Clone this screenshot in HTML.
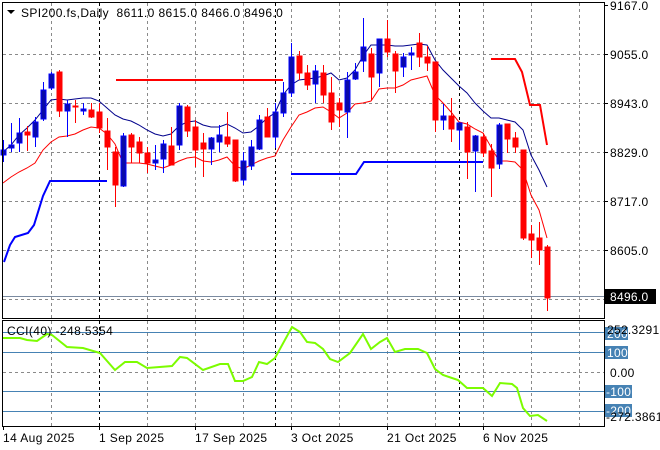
<!DOCTYPE html>
<html><head><meta charset="utf-8"><style>
html,body{margin:0;padding:0;background:#fff}
svg{display:block;font-family:"Liberation Sans",Tahoma,sans-serif}
.w{letter-spacing:0.4px;font-size:12px}
</style></head><body>
<svg width="660" height="450" viewBox="0 0 660 450" xmlns="http://www.w3.org/2000/svg">
<rect width="660" height="450" fill="#fff"/>
<g stroke="#8a8a8a" stroke-dasharray="3,3" stroke-width="1">
<line x1="51.5" y1="3" x2="51.5" y2="318"/><line x1="147.5" y1="3" x2="147.5" y2="318"/><line x1="195.5" y1="3" x2="195.5" y2="318"/><line x1="243.5" y1="3" x2="243.5" y2="318"/><line x1="291.5" y1="3" x2="291.5" y2="318"/><line x1="339.5" y1="3" x2="339.5" y2="318"/><line x1="387.5" y1="3" x2="387.5" y2="318"/><line x1="435.5" y1="3" x2="435.5" y2="318"/><line x1="483.5" y1="3" x2="483.5" y2="318"/><line x1="531.5" y1="3" x2="531.5" y2="318"/><line x1="579.5" y1="3" x2="579.5" y2="318"/>
<line x1="51.5" y1="321" x2="51.5" y2="426"/><line x1="147.5" y1="321" x2="147.5" y2="426"/><line x1="195.5" y1="321" x2="195.5" y2="426"/><line x1="243.5" y1="321" x2="243.5" y2="426"/><line x1="291.5" y1="321" x2="291.5" y2="426"/><line x1="339.5" y1="321" x2="339.5" y2="426"/><line x1="387.5" y1="321" x2="387.5" y2="426"/><line x1="435.5" y1="321" x2="435.5" y2="426"/><line x1="483.5" y1="321" x2="483.5" y2="426"/><line x1="531.5" y1="321" x2="531.5" y2="426"/><line x1="579.5" y1="321" x2="579.5" y2="426"/>
<line x1="3" y1="54.5" x2="604" y2="54.5"/><line x1="3" y1="103.5" x2="604" y2="103.5"/><line x1="3" y1="152.5" x2="604" y2="152.5"/><line x1="3" y1="201.5" x2="604" y2="201.5"/><line x1="3" y1="250.5" x2="604" y2="250.5"/><line x1="3" y1="299.5" x2="604" y2="299.5"/>
<line x1="3" y1="372.5" x2="604" y2="372.5"/>
</g>
<g stroke="#000" stroke-dasharray="3,3" stroke-width="1">
<line x1="99.5" y1="3" x2="99.5" y2="426"/><line x1="275.5" y1="3" x2="275.5" y2="426"/><line x1="459.5" y1="3" x2="459.5" y2="426"/>
</g>
<line x1="3" y1="296.5" x2="604" y2="296.5" stroke="#7a8aa0" stroke-width="1"/>
<g stroke="#4682b4" stroke-width="1">
<line x1="3" y1="332.5" x2="604" y2="332.5"/><line x1="3" y1="352.5" x2="604" y2="352.5"/><line x1="3" y1="391.5" x2="604" y2="391.5"/><line x1="3" y1="411.5" x2="604" y2="411.5"/>
</g>
<polyline fill="none" stroke="#ff0000" stroke-width="2" points="116,80 283,80"/>
<polyline fill="none" stroke="#ff0000" stroke-width="2" points="491,59 515,59 522,72 530,105 540,105 547,145"/>
<polyline fill="none" stroke="#0000ff" stroke-width="2" points="4,262 10,245 15,237 28,233 34,225 43,196 50,181 107,181"/>
<polyline fill="none" stroke="#0000ff" stroke-width="2" points="291,174 356,174 364,162 483,162"/>
<polyline fill="none" stroke="#00008b" stroke-width="1" points="3,152 11,145 19,135 27,128 35,120 43,110 51,100 59,99 67,100 75,99 83,98 91,98 99,101 107,108 115,115 123,119 131,121 139,125 147,130 155,134 163,136 171,134 179,126 187,122 195,121 203,125 211,127 219,127 227,124 235,128 243,133 251,132 259,126 267,118 275,113 283,95 291,85 299,80 307,79 315,78 323,76 331,73 339,80 347,78 355,70 363,56 371,45 379,45 387,45 395,46 403,46 411,45 419,44 427,45 435,60 443,70 451,78 459,86 467,93 475,103 483,111 491,118 499,118 507,120 515,122 523,130 531,155 539,170 547,187"/>
<polyline fill="none" stroke="#ff0000" stroke-width="1" points="3,183 11,177 19,172 27,168 35,163 43,150 51,142 59,137 67,136 75,134 83,130 91,127 99,128 107,134 115,144 123,163 131,163 139,163 147,164 155,166 163,168 171,165 179,161 187,158 195,157 203,161 211,162 219,160 227,157 235,166 243,169 251,165 259,161 267,158 275,156 283,140 291,127 299,115 307,112 315,108 323,107 331,112 339,118 347,113 355,104 363,103 371,101 379,89 387,88 395,88 403,85 411,80 419,78 427,76 435,95 443,103 451,112 459,122 467,124 475,129 483,133 491,147 499,161 507,161 515,162 523,170 531,195 539,210 547,238"/>
<g stroke="#0000ff" fill="#0a0aa8">
<line x1="3.5" y1="140" x2="3.5" y2="162"/><rect x="1" y="150" width="5" height="5"/>
<line x1="11.5" y1="123" x2="11.5" y2="152"/><rect x="9" y="145" width="5" height="3"/>
<line x1="19.5" y1="118" x2="19.5" y2="152"/><rect x="17" y="133" width="5" height="10"/>
<line x1="35.5" y1="117" x2="35.5" y2="147"/><rect x="33" y="122" width="5" height="15"/>
<line x1="43.5" y1="82" x2="43.5" y2="121"/><rect x="41" y="90" width="5" height="29"/>
<line x1="51.5" y1="72" x2="51.5" y2="90"/><rect x="49" y="74" width="5" height="14"/>
<line x1="67.5" y1="100" x2="67.5" y2="137"/><rect x="65" y="104" width="5" height="7"/>
<line x1="83.5" y1="103" x2="83.5" y2="115"/><rect x="81" y="109" width="5" height="2"/>
<line x1="123.5" y1="133" x2="123.5" y2="187"/><rect x="121" y="136" width="5" height="50"/>
<line x1="155.5" y1="145" x2="155.5" y2="170"/><rect x="153" y="160" width="5" height="3"/>
<line x1="163.5" y1="140" x2="163.5" y2="173"/><rect x="161" y="144" width="5" height="15"/>
<line x1="179.5" y1="103" x2="179.5" y2="150"/><rect x="177" y="106" width="5" height="39"/>
<line x1="211.5" y1="137" x2="211.5" y2="165"/><rect x="209" y="138" width="5" height="11"/>
<line x1="219.5" y1="125" x2="219.5" y2="152"/><rect x="217" y="135" width="5" height="7"/>
<line x1="243.5" y1="152" x2="243.5" y2="185"/><rect x="241" y="161" width="5" height="19"/>
<line x1="251.5" y1="140" x2="251.5" y2="170"/><rect x="249" y="147" width="5" height="19"/>
<line x1="259.5" y1="115" x2="259.5" y2="150"/><rect x="257" y="120" width="5" height="29"/>
<line x1="275.5" y1="103" x2="275.5" y2="148"/><rect x="273" y="112" width="5" height="25"/>
<line x1="283.5" y1="82" x2="283.5" y2="117"/><rect x="281" y="93" width="5" height="20"/>
<line x1="291.5" y1="43" x2="291.5" y2="97"/><rect x="289" y="57" width="5" height="36"/>
<line x1="315.5" y1="65" x2="315.5" y2="103"/><rect x="313" y="71" width="5" height="13"/>
<line x1="347.5" y1="72" x2="347.5" y2="138"/><rect x="345" y="80" width="5" height="32"/>
<line x1="355.5" y1="63" x2="355.5" y2="80"/><rect x="353" y="72" width="5" height="7"/>
<line x1="363.5" y1="18" x2="363.5" y2="72"/><rect x="361" y="47" width="5" height="14"/>
<line x1="379.5" y1="39" x2="379.5" y2="87"/><rect x="377" y="39" width="5" height="34"/>
<line x1="403.5" y1="53" x2="403.5" y2="77"/><rect x="401" y="57" width="5" height="10"/>
<line x1="411.5" y1="47" x2="411.5" y2="70"/><rect x="409" y="53" width="5" height="2"/>
<line x1="443.5" y1="104" x2="443.5" y2="130"/><rect x="441" y="116" width="5" height="4"/>
<line x1="459.5" y1="122" x2="459.5" y2="150"/><rect x="457" y="123" width="5" height="7"/>
<line x1="475.5" y1="135" x2="475.5" y2="192"/><rect x="473" y="136" width="5" height="15"/>
<line x1="499.5" y1="123" x2="499.5" y2="169"/><rect x="497" y="125" width="5" height="39"/>
</g>
<g stroke="#ff0000" fill="#ff0000">
<line x1="27.5" y1="126" x2="27.5" y2="151"/><rect x="25" y="132" width="5" height="3"/>
<line x1="59.5" y1="70" x2="59.5" y2="117"/><rect x="57" y="72" width="5" height="39"/>
<line x1="75.5" y1="100" x2="75.5" y2="123"/><rect x="73" y="106" width="5" height="1"/>
<line x1="91.5" y1="103" x2="91.5" y2="118"/><rect x="89" y="110" width="5" height="7"/>
<line x1="99.5" y1="103" x2="99.5" y2="133"/><rect x="97" y="112" width="5" height="16"/>
<line x1="107.5" y1="118" x2="107.5" y2="170"/><rect x="105" y="131" width="5" height="16"/>
<line x1="115.5" y1="147" x2="115.5" y2="207"/><rect x="113" y="152" width="5" height="33"/>
<line x1="131.5" y1="133" x2="131.5" y2="163"/><rect x="129" y="135" width="5" height="12"/>
<line x1="139.5" y1="137" x2="139.5" y2="163"/><rect x="137" y="142" width="5" height="11"/>
<line x1="147.5" y1="147" x2="147.5" y2="173"/><rect x="145" y="153" width="5" height="10"/>
<line x1="171.5" y1="127" x2="171.5" y2="165"/><rect x="169" y="146" width="5" height="19"/>
<line x1="187.5" y1="105" x2="187.5" y2="137"/><rect x="185" y="107" width="5" height="24"/>
<line x1="195.5" y1="120" x2="195.5" y2="167"/><rect x="193" y="127" width="5" height="23"/>
<line x1="203.5" y1="133" x2="203.5" y2="177"/><rect x="201" y="143" width="5" height="6"/>
<line x1="227.5" y1="112" x2="227.5" y2="147"/><rect x="225" y="137" width="5" height="7"/>
<line x1="235.5" y1="140" x2="235.5" y2="182"/><rect x="233" y="140" width="5" height="41"/>
<line x1="267.5" y1="108" x2="267.5" y2="137"/><rect x="265" y="117" width="5" height="20"/>
<line x1="299.5" y1="51" x2="299.5" y2="80"/><rect x="297" y="56" width="5" height="17"/>
<line x1="307.5" y1="65" x2="307.5" y2="90"/><rect x="305" y="73" width="5" height="12"/>
<line x1="323.5" y1="65" x2="323.5" y2="103"/><rect x="321" y="73" width="5" height="22"/>
<line x1="331.5" y1="77" x2="331.5" y2="130"/><rect x="329" y="93" width="5" height="29"/>
<line x1="339.5" y1="98" x2="339.5" y2="127"/><rect x="337" y="103" width="5" height="7"/>
<line x1="371.5" y1="48" x2="371.5" y2="100"/><rect x="369" y="54" width="5" height="23"/>
<line x1="387.5" y1="20" x2="387.5" y2="57"/><rect x="385" y="39" width="5" height="13"/>
<line x1="395.5" y1="51" x2="395.5" y2="93"/><rect x="393" y="54" width="5" height="17"/>
<line x1="419.5" y1="33" x2="419.5" y2="67"/><rect x="417" y="43" width="5" height="14"/>
<line x1="427.5" y1="46" x2="427.5" y2="71"/><rect x="425" y="57" width="5" height="6"/>
<line x1="435.5" y1="62" x2="435.5" y2="132"/><rect x="433" y="62" width="5" height="58"/>
<line x1="451.5" y1="98" x2="451.5" y2="142"/><rect x="449" y="116" width="5" height="13"/>
<line x1="467.5" y1="122" x2="467.5" y2="179"/><rect x="465" y="127" width="5" height="25"/>
<line x1="483.5" y1="133" x2="483.5" y2="157"/><rect x="481" y="137" width="5" height="16"/>
<line x1="491.5" y1="144" x2="491.5" y2="197"/><rect x="489" y="151" width="5" height="17"/>
<line x1="507.5" y1="124" x2="507.5" y2="153"/><rect x="505" y="124" width="5" height="15"/>
<line x1="515.5" y1="132" x2="515.5" y2="153"/><rect x="513" y="138" width="5" height="9"/>
<line x1="523.5" y1="150" x2="523.5" y2="240"/><rect x="521" y="150" width="5" height="88"/>
<line x1="531.5" y1="225" x2="531.5" y2="258"/><rect x="529" y="234" width="5" height="6"/>
<line x1="539.5" y1="222" x2="539.5" y2="265"/><rect x="537" y="238" width="5" height="12"/>
<line x1="547.5" y1="245" x2="547.5" y2="311"/><rect x="545" y="247" width="5" height="51"/>
</g>
<polyline fill="none" stroke="#7cfc00" stroke-width="2" points="3,338 20,338 27,340 37,341 47,334 52,335 67,347 83,348 100,353 115,370 125,362 137,362 147,368 172,366 180,357 187,358 203,370 220,364 228,364 235,381 243,381 252,377 259,362 267,364 275,358 292,327 300,332 307,342 315,343 323,349 330,359 338,362 350,353 363,334 371,349 380,342 387,338 395,352 405,349 418,349 427,353 435,369 443,375 458,380 467,388 483,388 492,396 500,383 512,384 517,388 523,408 530,416 538,415 547,421"/>
<rect x="2.5" y="2.5" width="602" height="316" fill="none" stroke="#000"/>
<rect x="2.5" y="320.5" width="602" height="106" fill="none" stroke="#000"/>
<g stroke="#000"><line x1="604" y1="5.5" x2="608" y2="5.5"/><line x1="604" y1="54.5" x2="608" y2="54.5"/><line x1="604" y1="103.5" x2="608" y2="103.5"/><line x1="604" y1="152.5" x2="608" y2="152.5"/><line x1="604" y1="201.5" x2="608" y2="201.5"/><line x1="604" y1="250.5" x2="608" y2="250.5"/>
<line x1="3.5" y1="426" x2="3.5" y2="430"/><line x1="99.5" y1="426" x2="99.5" y2="430"/><line x1="195.5" y1="426" x2="195.5" y2="430"/><line x1="291.5" y1="426" x2="291.5" y2="430"/><line x1="387.5" y1="426" x2="387.5" y2="430"/><line x1="483.5" y1="426" x2="483.5" y2="430"/></g>
<g font-size="12" fill="#000" letter-spacing="0.3">
<text x="610" y="10">9167.0</text><text x="610" y="59">9055.0</text><text x="610" y="108">8943.0</text><text x="610" y="157">8829.0</text><text x="610" y="206">8717.0</text><text x="610" y="255">8605.0</text>
</g>
<rect x="605" y="289" width="51" height="15" fill="#000"/>
<text x="610" y="301" font-size="12" letter-spacing="0.3" fill="#fff">8496.0</text>
<g fill="#4682b4"><rect x="605" y="327" width="23" height="13"/><rect x="605" y="346" width="23" height="13"/><rect x="605" y="385" width="27" height="13"/><rect x="605" y="404" width="27" height="13"/></g>
<g font-size="12" fill="#fff" letter-spacing="0.3"><text x="607" y="338">200</text><text x="607" y="357">100</text><text x="606" y="396">-100</text><text x="606" y="415">-200</text></g>
<g font-size="12" fill="#000" letter-spacing="0.3"><text x="607" y="334">252.3291</text><text x="610" y="377">0.00</text><text x="606" y="421">-272.3861</text></g>
<g class="w" fill="#000">
<text x="3" y="442">14 Aug 2025</text><text x="99" y="442">1 Sep 2025</text><text x="195" y="442">17 Sep 2025</text><text x="291" y="442">3 Oct 2025</text><text x="387" y="442">21 Oct 2025</text><text x="483" y="442">6 Nov 2025</text>
</g>
<polygon points="7,10 15,10 11,14" fill="#000"/>
<text x="21" y="17" class="w" fill="#000" xml:space="preserve">SPI200.fs,Daily  8611.0 8615.0 8466.0 8496.0</text>
<text x="7" y="335" class="w" fill="#000">CCI(40) -248.5354</text>
</svg>
</body></html>
